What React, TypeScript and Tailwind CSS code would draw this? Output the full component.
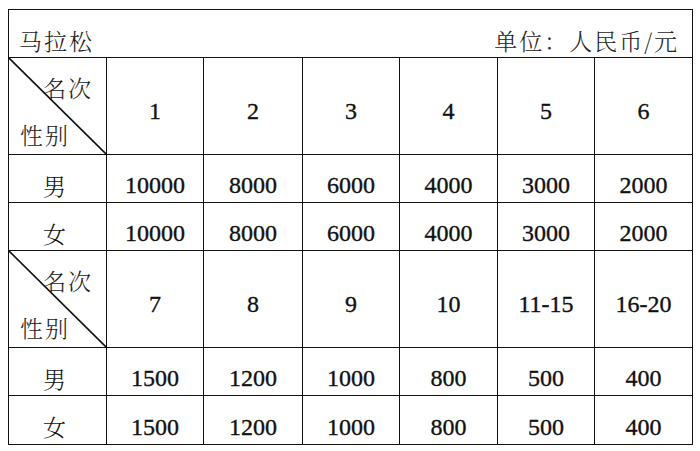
import React from "react";

const serif = "[font-family:Liberation_Serif,Times_New_Roman,serif] [-webkit-text-stroke:0.35px_#111]";
const cjk = "[font-family:Noto_Serif_CJK_SC,Noto_Sans_CJK_SC,Noto_Sans_CJK_JP,serif]";

function Diag() {
  return (
    <div className="relative flex flex-col justify-between bg-white">
      <svg className="absolute inset-0 h-full w-full" viewBox="0 0 100 100" preserveAspectRatio="none">
        <line x1="0" y1="0" x2="100" y2="100" stroke="#111" strokeWidth="1.6" vectorEffect="non-scaling-stroke" />
      </svg>
      <div className={`${cjk} font-light text-[23px] leading-none tracking-[2px] text-[#222] self-end pr-[13px] pt-[18px]`}>名次</div>
      <div className={`${cjk} font-light text-[23px] leading-none tracking-[2px] text-[#222] self-start pl-[11px] pb-[8px]`}>性别</div>
    </div>
  );
}

function Cell({ children, cn = false, tall = false }: { children: React.ReactNode; cn?: boolean; tall?: boolean }) {
  return (
    <div
      className={`flex justify-center bg-white ${tall ? "items-center pt-[10px]" : "items-center pt-[13px]"} ${
        cn ? `${cjk} font-light text-[23px] pr-[6px]` : `${serif} text-[24px]`
      } leading-none text-[#111]`}
    >
      {children}
    </div>
  );
}

export default function App() {
  const head1 = ["1", "2", "3", "4", "5", "6"];
  const r1 = ["10000", "8000", "6000", "4000", "3000", "2000"];
  const head2 = ["7", "8", "9", "10", "11-15", "16-20"];
  const r2 = ["1500", "1200", "1000", "800", "500", "400"];
  return (
    <div className="h-[451px] w-[700px] bg-white pl-[8px] pt-[9px]">
      <div className="grid w-[685px] grid-cols-[97px_96px_98px_96px_97px_96px_97px] grid-rows-[47px_96px_47px_47px_96px_47px_48px] gap-px bg-[#111] p-px">
        <div className={`col-span-7 flex items-center justify-between bg-white pl-[10px] pr-[13px] pt-[13px] ${cjk} font-light text-[23px] leading-none text-[#222]`}>
          <span className="tracking-[2px]">马拉松</span>
          <span className="tracking-[2px]">单位：人民币/元</span>
        </div>
        <Diag />
        {head1.map((h) => (
          <Cell key={"h1" + h} tall>{h}</Cell>
        ))}
        <Cell cn>男</Cell>
        {r1.map((v, i) => (
          <Cell key={"m1" + i}>{v}</Cell>
        ))}
        <Cell cn>女</Cell>
        {r1.map((v, i) => (
          <Cell key={"f1" + i}>{v}</Cell>
        ))}
        <Diag />
        {head2.map((h) => (
          <Cell key={"h2" + h} tall>{h}</Cell>
        ))}
        <Cell cn>男</Cell>
        {r2.map((v, i) => (
          <Cell key={"m2" + i}>{v}</Cell>
        ))}
        <Cell cn>女</Cell>
        {r2.map((v, i) => (
          <Cell key={"f2" + i}>{v}</Cell>
        ))}
      </div>
    </div>
  );
}
